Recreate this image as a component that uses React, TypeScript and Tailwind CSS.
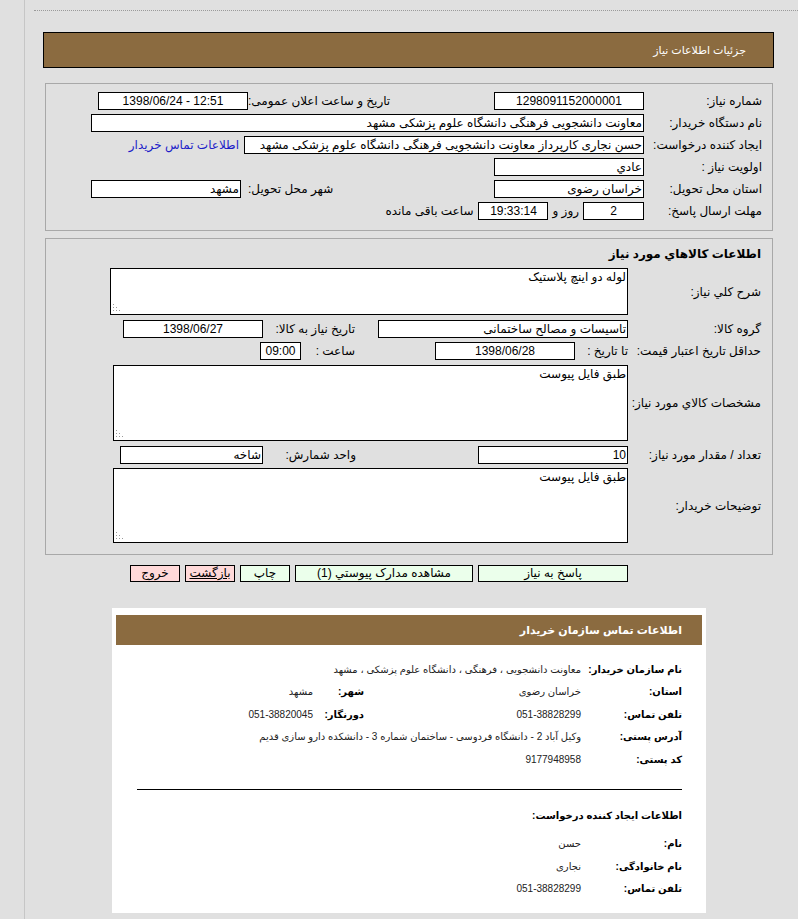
import React from 'react';

const Grip: React.FC = () => (
  <svg className="absolute bottom-[2px] left-[2px]" width="8" height="8" viewBox="0 0 8 8">
    {[
      [1, 1],
      [1, 4],
      [4, 4],
      [1, 7],
      [4, 7],
      [7, 7],
    ].map(([x, y], i) => (
      <rect key={i} x={x - 1} y={y - 1} width="1" height="1" fill="#9a9a9a" />
    ))}
  </svg>
);

const Box: React.FC<{ className?: string; ltr?: boolean; children?: React.ReactNode }> = ({
  className = '',
  ltr,
  children,
}) => (
  <div
    dir={ltr ? 'ltr' : undefined}
    className={`h-[18px] shrink-0 overflow-hidden whitespace-nowrap border border-black bg-white px-[1px] leading-[16px] ${className}`}
  >
    {children}
  </div>
);

const Area: React.FC<{ className?: string; text?: string }> = ({ className = '', text }) => (
  <div className={`relative shrink-0 border border-black bg-white px-[1px] ${className}`}>
    <div className="leading-[16px]">{text}</div>
    <Grip />
  </div>
);

const Row: React.FC<{ label: string; w: string; className?: string; children?: React.ReactNode }> = ({
  label,
  w,
  className = 'h-[22px]',
  children,
}) => (
  <div className={`flex items-center ${className}`}>
    <div className={`shrink-0 whitespace-nowrap ${w}`}>{label}</div>
    {children}
  </div>
);

const Btn: React.FC<{ className?: string; children?: React.ReactNode }> = ({ className = '', children }) => (
  <div
    className={`flex h-[17px] shrink-0 items-center justify-center border border-black leading-[15px] ${className}`}
  >
    {children}
  </div>
);

const CardRow: React.FC<{ label: string; value: string; label2?: string; value2?: string }> = ({
  label,
  value,
  label2,
  value2,
}) => (
  <div className="flex h-[22.5px] items-center">
    <div className="w-[101px] shrink-0 whitespace-nowrap font-bold text-black">{label}</div>
    <div className="w-[217px] shrink-0 whitespace-nowrap text-[#222]">{value}</div>
    {label2 && <div className="w-[51px] shrink-0 whitespace-nowrap font-bold text-black">{label2}</div>}
    {value2 && <div className="whitespace-nowrap text-[#222]">{value2}</div>}
  </div>
);

export default function App() {
  return (
    <div
      dir="rtl"
      className="min-h-[919px] bg-[#e0e0e0] font-['Liberation_Sans','DejaVu_Sans',sans-serif] text-[12px] text-black"
    >
      <div className="ml-[24px] min-h-[919px] border-l border-[#c6c6c6]">
        {/* dotted rule */}
        <div className="ml-[9px] pt-[10px]">
          <div className="border-t border-dotted border-[#9a9a9a]" />
        </div>

        <div className="mr-[24px] ml-[18px] mt-[21px]">
          {/* title bar */}
          <div className="flex h-[36px] items-center border border-black bg-[#8b6b40] pr-[27px] text-[11px] text-white">
            جزئیات اطلاعات نیاز
          </div>

          {/* need details */}
          <section className="mt-[15px] ml-[2px] mr-[1px] border border-[#a8a8a8] pt-[6px] pr-[10px] pb-[8px] pl-[45px]">
            <Row label="شماره نیاز:" w="w-[118px]">
              <Box className="w-[150px] text-center">1298091152000001</Box>
              <div className="flex-1" />
              <span className="whitespace-nowrap">تاریخ و ساعت اعلان عمومی:</span>
              <Box ltr className="ms-[7px] w-[150px] text-center">
                1398/06/24 - 12:51
              </Box>
            </Row>
            <Row label="نام دستگاه خریدار:" w="w-[118px]">
              <Box className="flex-1">معاونت دانشجویی فرهنگی دانشگاه علوم پزشکی مشهد</Box>
            </Row>
            <Row label="ایجاد کننده درخواست:" w="w-[118px]">
              <Box className="w-[400px]">حسن نجاری کارپرداز معاونت دانشجویی فرهنگی دانشگاه علوم پزشکی مشهد</Box>
              <span className="ms-[5px] whitespace-nowrap text-[#1c1cc8]">اطلاعات تماس خریدار</span>
            </Row>
            <Row label="اولویت نیاز :" w="w-[118px]">
              <Box className="w-[150px]">عادي</Box>
            </Row>
            <Row label="استان محل تحویل:" w="w-[118px]">
              <Box className="w-[150px]">خراسان رضوی</Box>
              <div className="flex-1" />
              <span className="whitespace-nowrap">شهر محل تحویل:</span>
              <Box className="ms-[7px] w-[150px]">مشهد</Box>
            </Row>
            <Row label="مهلت ارسال پاسخ:" w="w-[118px]">
              <Box className="w-[61px] text-center">2</Box>
              <span className="ms-[4px] whitespace-nowrap">روز و</span>
              <Box className="ms-[4px] w-[70px] text-center">19:33:14</Box>
              <span className="ms-[5px] whitespace-nowrap">ساعت باقی مانده</span>
            </Row>
          </section>

          {/* goods */}
          <section className="mt-[7px] ml-[2px] mr-[1px] border border-[#a8a8a8] pt-[6px] pr-[11px] pb-[11px]">
            <div className="mb-[5px] h-[18px] font-bold leading-[18px]">اطلاعات کالاهاي مورد نیاز</div>

            <Row label="شرح کلي نیاز:" w="w-[133px]" className="">
              <Area className="h-[47px] w-[518px]" text="لوله دو اینچ پلاستیک" />
            </Row>

            <Row label="گروه کالا:" w="w-[133px]" className="mt-[5px] h-[18px]">
              <Box className="w-[250px]">تاسیسات و مصالح ساختمانی</Box>
              <span className="ms-[23px] w-[92px] shrink-0 whitespace-nowrap">تاریخ نیاز به کالا:</span>
              <Box className="w-[140px] text-center">1398/06/27</Box>
            </Row>

            <Row label="حداقل تاریخ اعتبار قیمت:" w="w-[133px]" className="mt-[4px] h-[18px]">
              <span className="w-[53px] shrink-0 whitespace-nowrap">تا تاریخ :</span>
              <Box className="w-[140px] text-center">1398/06/28</Box>
              <span className="ms-[80px] w-[54px] shrink-0 whitespace-nowrap">ساعت :</span>
              <Box className="w-[41px] text-center">09:00</Box>
            </Row>

            <Row label="مشخصات کالاي مورد نیاز:" w="w-[133px]" className="mt-[5px]">
              <Area className="h-[76px] w-[515px]" text="طبق فایل پیوست" />
            </Row>

            <Row label="تعداد / مقدار مورد نیاز:" w="w-[133px]" className="mt-[5px] h-[18px]">
              <Box className="w-[150px]">10</Box>
              <span className="ms-[122px] w-[93px] shrink-0 whitespace-nowrap">واحد شمارش:</span>
              <Box className="w-[143px]">شاخه</Box>
            </Row>

            <Row label="توضیحات خریدار:" w="w-[133px]" className="mt-[4px]">
              <Area className="h-[75px] w-[515px]" text="طبق فایل پیوست" />
            </Row>
          </section>

          {/* actions */}
          <div className="mt-[10px] flex gap-[5px] pr-[146px]">
            <Btn className="w-[150px] bg-[#ebffeb]">پاسخ به نیاز</Btn>
            <Btn className="w-[178px] bg-[#ebffeb]">مشاهده مدارک پیوستي (1)</Btn>
            <Btn className="w-[50px] bg-[#ebffeb]">چاپ</Btn>
            <Btn className="w-[50px] bg-[#ffd9d9] underline">بازگشت</Btn>
            <Btn className="w-[50px] bg-[#ffd9d9]">خروج</Btn>
          </div>
        </div>

        {/* buyer contact card */}
        <div className="mt-[26px] mr-[92px] w-[594px] bg-white px-[4px] pt-[7px] pb-[13px] text-[10px]">
          <div className="flex h-[30px] items-center bg-[#8b6b40] pr-[20px] text-[11px] font-bold text-white">
            اطلاعات تماس سازمان خریدار
          </div>
          <div className="pt-[13px] pr-[20px]">
            <CardRow label="نام سازمان خریدار:" value="معاونت دانشجویی ، فرهنگی ، دانشگاه علوم پزشکی ، مشهد" />
            <CardRow label="استان:" value="خراسان رضوی" label2="شهر:" value2="مشهد" />
            <CardRow label="تلفن تماس:" value="051-38828299" label2="دورنگار:" value2="051-38820045" />
            <CardRow label="آدرس پستی:" value="وکیل آباد 2 - دانشگاه فردوسی - ساختمان شماره 3 - دانشکده دارو سازی قدیم" />
            <CardRow label="کد پستی:" value="9177948958" />
          </div>
          <div className="mt-[18px] mr-[20px] ml-[21px] border-t border-black" />
          <div className="pr-[20px]">
            <div className="mt-[19px] h-[14px] font-bold leading-[14px]">اطلاعات ایجاد کننده درخواست:</div>
            <div className="mt-[10px]">
              <CardRow label="نام:" value="حسن" />
              <CardRow label="نام خانوادگی:" value="نجاری" />
              <CardRow label="تلفن تماس:" value="051-38828299" />
            </div>
          </div>
        </div>
      </div>
    </div>
  );
}
